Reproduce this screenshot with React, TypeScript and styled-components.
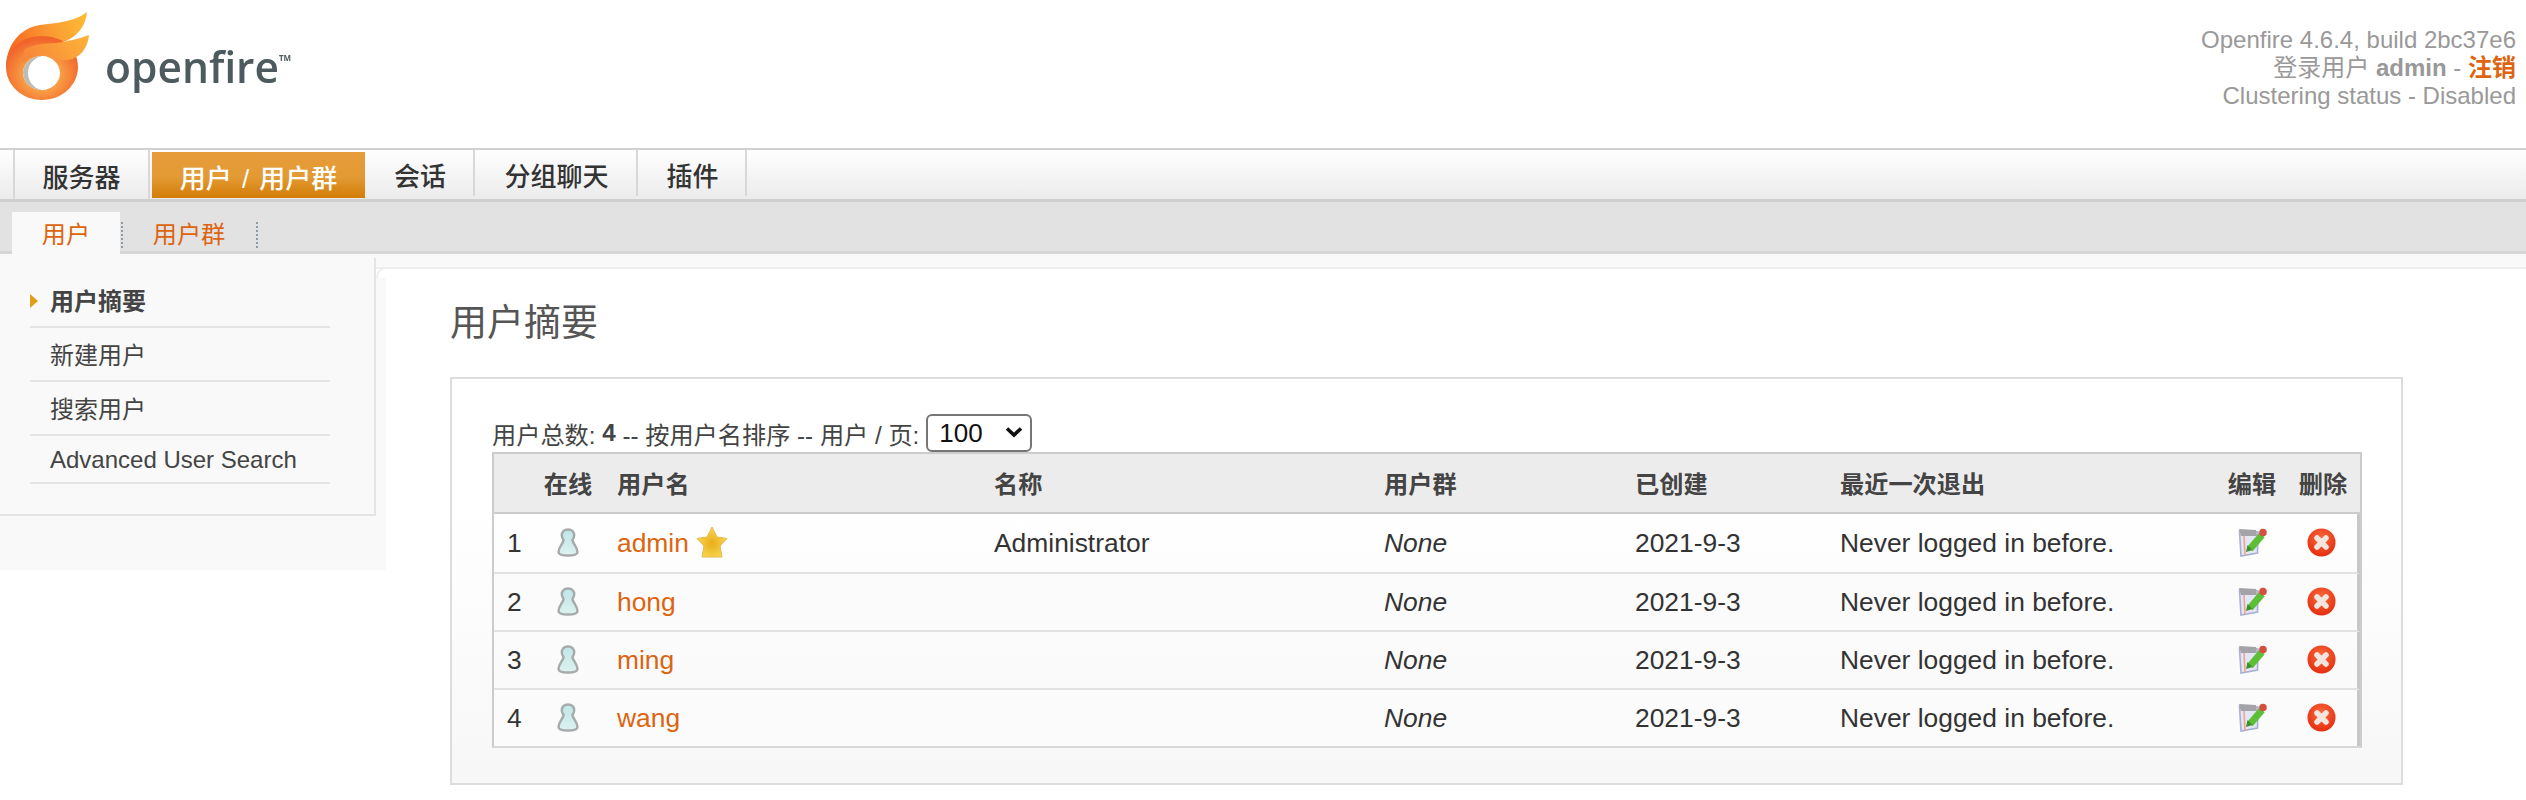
import styled, { createGlobalStyle } from "styled-components";

const GlobalStyle = createGlobalStyle`
  html, body {
    margin: 0;
    padding: 0;
    background: #fff;
    font-family: "Liberation Sans", "Noto Sans CJK SC", sans-serif;
    color: #333;
  }
`;

const Page = styled.div`
  width: 2526px;
  height: 800px;
  overflow: hidden;
`;

const Header = styled.header`
  height: 148px;
  display: flex;
  justify-content: space-between;
`;

const Brand = styled.div`
  display: flex;
  align-items: flex-start;
`;

const Wordmark = styled.span`
  font-family: "Open Sans", sans-serif;
  font-weight: 600;
  font-size: 42.5px;
  line-height: 50px;
  color: #4d5a5e;
  margin: 42px 0 0 10px;
  filter: blur(0.5px);
`;

const Trademark = styled.sup`
  font-size: 8px;
  line-height: 8px;
  font-weight: 700;
  vertical-align: 22px;
`;

const Info = styled.div`
  padding: 26px 10px 0 0;
  text-align: right;
  font-size: 24px;
  line-height: 28px;
  color: #999;
`;

const Logout = styled.a`
  color: #dd6410;
  font-weight: 700;
`;

const MainNav = styled.nav`
  height: 54px;
  box-sizing: border-box;
  display: flex;
  gap: 2px;
  padding-left: 13px;
  border-top: 2px solid #d0d0d0;
  border-bottom: 3px solid #cfcfcf;
  background: linear-gradient(#fff, #ebebeb);
`;

const MainTab = styled.a<{ $active?: boolean; $width: number }>`
  width: ${(p) => p.$width}px;
  box-sizing: border-box;
  display: flex;
  align-items: center;
  justify-content: center;
  padding-top: 2px;
  font-size: 26px;
  font-weight: 500;
  word-spacing: 3px;
  color: ${(p) => (p.$active ? "#fff" : "#333")};
  background: ${(p) =>
    p.$active
      ? "linear-gradient(#e69c3a 0%, #e39a33 55%, #d27c06 100%)"
      : "transparent"};
  margin: ${(p) => (p.$active ? "2px 0 1px" : "0 0 3px")};
  border-right: ${(p) => (p.$active ? "none" : "2px solid #d8d8d8")};

  &:first-child {
    border-left: 2px solid #d8d8d8;
    margin-bottom: 0;
  }
`;

const SubNav = styled.nav`
  height: 52px;
  box-sizing: border-box;
  display: flex;
  align-items: flex-end;
  padding-left: 12px;
  background: #e2e2e2;
  border-bottom: 3px solid #d6d6d6;
`;

const SubTab = styled.a<{ $active?: boolean; $width: number }>`
  width: ${(p) => p.$width}px;
  height: 45px;
  margin-bottom: -6px;
  padding-bottom: 5px;
  box-sizing: border-box;
  display: flex;
  align-items: center;
  justify-content: center;
  font-size: 24.2px;
  color: #dd6410;
  background: ${(p) => (p.$active ? "#f9f9f9" : "transparent")};
  position: relative;
  z-index: 1;
`;

const SubDivider = styled.span`
  width: 0;
  height: 26px;
  margin: 0 0 3px 1px;
  border-left: 2px dotted #8b9ca6;
`;

const Body = styled.div`
  display: flex;
  align-items: flex-start;
  background: linear-gradient(#f9f9f9 13px, #fff 13px);
`;

const SideColumn = styled.aside`
  width: 376px;
  height: 316px;
  padding-top: 4px;
  box-sizing: border-box;
  background: #f9f9f9;
  flex-shrink: 0;
  position: relative;

  &::after {
    content: "";
    position: absolute;
    left: 376px;
    top: 24px;
    width: 10px;
    bottom: 0;
    background: #f9f9f9;
    z-index: 1;
  }
`;

const SidePanel = styled.div`
  height: 258px;
  box-sizing: border-box;
  padding: 17px 0 0 30px;
  border-right: 2px solid #e4e4e4;
  border-bottom: 2px solid #e4e4e4;
`;

const SideItem = styled.a<{ $active?: boolean; $height: number; $lineHeight: number }>`
  display: block;
  width: 300px;
  height: ${(p) => p.$height}px;
  box-sizing: border-box;
  padding-left: 20px;
  font-size: 24px;
  line-height: ${(p) => p.$lineHeight}px;
  font-weight: ${(p) => (p.$active ? 700 : 400)};
  color: #444;
  border-bottom: 2px solid #e4e4e4;
  position: relative;
`;

const Caret = styled.span`
  position: absolute;
  left: 0;
  top: 19px;
  width: 0;
  height: 0;
  border-top: 7.5px solid transparent;
  border-bottom: 7.5px solid transparent;
  border-left: 8px solid #e0a015;
`;

const Content = styled.main`
  flex: 1;
  margin-top: 13px;
  background: #fff;
  border-top: 2px solid #eee;
  padding-left: 74px;
  position: relative;

  &::before {
    content: "";
    position: absolute;
    left: 0;
    top: -2px;
    width: 12px;
    height: 12px;
    box-sizing: border-box;
    border-top: 2px solid #eee;
    border-left: 2px solid #eee;
    border-top-left-radius: 10px;
  }
`;

const Title = styled.h1`
  margin: 0;
  height: 108px;
  font-size: 37px;
  line-height: 110px;
  font-weight: 400;
  color: #555;
`;

const Box = styled.section`
  width: 1953px;
  height: 408px;
  box-sizing: border-box;
  border: 2px solid #ddd;
  background: linear-gradient(#fff 30%, #f7f7f7);
  padding: 35px 40px 0;
`;

const Summary = styled.div`
  display: flex;
  align-items: center;
  height: 38px;
  font-size: 24.2px;
  color: #444;
  white-space: pre;
`;

const SelectWrap = styled.span`
  position: relative;
  display: inline-flex;
  margin-left: 7px;
`;

const PerPage = styled.select`
  appearance: none;
  width: 106px;
  height: 38px;
  box-sizing: border-box;
  padding-left: 11px;
  font-family: "Liberation Sans", sans-serif;
  font-size: 26px;
  color: #111;
  background: #fff;
  border: 2px solid #767676;
  border-radius: 6px;
`;

const Chevron = styled.svg`
  position: absolute;
  right: 9px;
  top: 12px;
  pointer-events: none;
`;

const Table = styled.table`
  width: 1870px;
  table-layout: fixed;
  border-collapse: separate;
  border-spacing: 0;
  box-sizing: border-box;
  border-top: 2px solid #ccc;
  border-left: 2px solid #ccc;
  border-right: 2px solid #ccc;
  border-bottom: 2px solid #d8d8d8;
  font-size: 26.4px;
  color: #333;
`;

const HeadCell = styled.th<{ $center?: boolean }>`
  height: 60px;
  box-sizing: border-box;
  padding: 0 0 2px ${(p) => (p.$center ? 0 : 16)}px;
  background: #ececec;
  border-bottom: 2px solid #ccc;
  font-size: 24.2px;
  font-weight: 700;
  color: #444;
  text-align: ${(p) => (p.$center ? "center" : "left")};
`;

const Row = styled.tr`
  &:nth-child(even) {
    background: #fbfbfb;
  }
`;

const Cell = styled.td<{ $center?: boolean; $italic?: boolean }>`
  height: 58px;
  box-sizing: border-box;
  padding: 0 0 0 ${(p) => (p.$center ? 0 : 16)}px;
  border-bottom: 2px solid #e2e2e2;
  text-align: ${(p) => (p.$center ? "center" : "left")};
  font-style: ${(p) => (p.$italic ? "italic" : "normal")};

  tr:first-child > & {
    height: 60px;
  }
  tr:last-child > & {
    height: 56px;
    border-bottom: none;
  }
  &:last-child {
    border-right: 3px solid #c8c8c8;
  }
`;

const IndexCell = styled(Cell)`
  padding-left: 13px;
`;

const UserLink = styled.a`
  color: #dd6410;
`;

const UserCell = styled.div`
  display: flex;
  align-items: center;
  gap: 7px;
`;

const IconWrap = styled.span`
  display: inline-flex;
  vertical-align: middle;
  margin-bottom: 3px;
  filter: blur(0.5px);
`;

function Flame() {
  return (
    <svg width="95" height="105" viewBox="0 0 95 105">
      <defs>
        <linearGradient id="upper" x1="0" y1="0.5" x2="1" y2="0.3">
          <stop offset="0" stopColor="#f6661f" />
          <stop offset="0.55" stopColor="#fa9a33" />
          <stop offset="1" stopColor="#fdb934" />
        </linearGradient>
        <radialGradient id="ring" cx="0.5" cy="0.6" r="0.55">
          <stop offset="0.4" stopColor="#f9a548" />
          <stop offset="1" stopColor="#f1652c" />
        </radialGradient>
        <linearGradient id="wing" x1="0" y1="0.6" x2="1" y2="0.3">
          <stop offset="0" stopColor="#f7873a" />
          <stop offset="1" stopColor="#fdb037" />
        </linearGradient>
      </defs>
      <path
        d="M6 68C6 45 20 28 40 25C55 23 75 22 87 12C86 25 78 36 66 41C55 44 38 42 26 48C15 53 8 60 6 68Z"
        fill="url(#upper)"
      />
      <path
        fillRule="evenodd"
        d="M42 36C62 36 78 48 78 67C78 85 62 100 42 100C22 100 6 85 6 67C6 48 22 36 42 36ZM42 56C31 56 23 64 23 73C23 82 31 90 42 90C52 90 60 82 60 73C60 64 52 56 42 56Z"
        fill="url(#ring)"
      />
      <path
        d="M24 50C35 42 55 44 63 42C72 40 82 38 89 35C88 48 80 58 68 60C58 61 50 54 40 55C32 56 26 60 22 63Z"
        fill="url(#wing)"
      />
      <path
        d="M42 56C31 56 23 64 23 73C23 82 31 90 42 90C33 88 28 81 28 73C28 65 33 58 42 56Z"
        fill="#bdbdb5"
      />
    </svg>
  );
}

function Person() {
  return (
    <svg width="22" height="29" viewBox="0 0 22 29">
      <defs>
        <linearGradient id="pawn" x1="0" y1="0" x2="0" y2="1">
          <stop offset="0" stopColor="#bfe6e6" />
          <stop offset="1" stopColor="#dcf2f0" />
        </linearGradient>
      </defs>
      <path
        d="M11 1.5C7 1.5 4.8 4 4.8 7.5C4.8 9.5 5.8 11 6.6 12C6 16 1.5 19 1.5 24C1.5 27 6 27.5 11 27.5C16 27.5 20.5 27 20.5 24C20.5 19 16 16 15.4 12C16.2 11 17.2 9.5 17.2 7.5C17.2 4 15 1.5 11 1.5Z"
        fill="url(#pawn)"
        stroke="#a6aaaa"
        strokeWidth="2.4"
      />
    </svg>
  );
}

function Star() {
  return (
    <svg width="32" height="32" viewBox="0 0 32 32">
      <defs>
        <radialGradient id="gold" cx="0.5" cy="0.55" r="0.6">
          <stop offset="0" stopColor="#e8ac18" />
          <stop offset="1" stopColor="#fbdc58" />
        </radialGradient>
      </defs>
      <path
        d="M16 1L21 11L31 12.5L24 20L26 31H6L8 20L1 12.5L11 11Z"
        fill="url(#gold)"
        stroke="#e6b84a"
        strokeWidth="1"
        strokeLinejoin="round"
      />
    </svg>
  );
}

function EditIcon() {
  return (
    <svg width="29" height="29" viewBox="0 0 29 29">
      <path d="M1.5 3L20 4L19.5 25L3 28Z" fill="#e2e6f7" stroke="#a9afd0" strokeWidth="1.6" />
      <path d="M1 1L18 2L19 8L3 8Z" fill="#a3a3a8" />
      <path d="M6 8L7 27" stroke="#f0a48c" strokeWidth="1.6" />
      <path d="M12 21L24 7" stroke="#5cbf36" strokeWidth="7" />
      <path d="M8 24L9.5 17L14.5 22Z" fill="#3f8f2a" />
      <circle cx="25" cy="4.5" r="3.8" fill="#d3503e" />
    </svg>
  );
}

function DeleteIcon() {
  return (
    <svg width="29" height="29" viewBox="0 0 29 29">
      <defs>
        <radialGradient id="red" cx="0.5" cy="0.35" r="0.7">
          <stop offset="0" stopColor="#fb6a3d" />
          <stop offset="1" stopColor="#e3290b" />
        </radialGradient>
      </defs>
      <circle cx="14.5" cy="14.5" r="14" fill="url(#red)" />
      <path d="M10 10L19 19M19 10L10 19" stroke="#f4e6df" strokeWidth="5.5" strokeLinecap="round" />
    </svg>
  );
}

const users = [
  { name: "admin", full: "Administrator", isAdmin: true },
  { name: "hong", full: "" },
  { name: "ming", full: "" },
  { name: "wang", full: "" },
];

function App() {
  return (
    <Page>
      <GlobalStyle />
      <Header>
        <Brand>
          <Flame />
          <Wordmark>
            openfire<Trademark>TM</Trademark>
          </Wordmark>
        </Brand>
        <Info>
          <div>Openfire 4.6.4, build 2bc37e6</div>
          <div>
            登录用户 <b>admin</b> - <Logout>注销</Logout>
          </div>
          <div>Clustering status - Disabled</div>
        </Info>
      </Header>
      <MainNav>
        <MainTab $width={137}>服务器</MainTab>
        <MainTab $active $width={213}>用户 / 用户群</MainTab>
        <MainTab $width={108}>会话</MainTab>
        <MainTab $width={161}>分组聊天</MainTab>
        <MainTab $width={107}>插件</MainTab>
      </MainNav>
      <SubNav>
        <SubTab $active $width={108}>用户</SubTab>
        <SubDivider />
        <SubTab $width={132}>用户群</SubTab>
        <SubDivider />
      </SubNav>
      <Body>
        <SideColumn>
          <SidePanel>
            <SideItem $active $height={53} $lineHeight={54}>
              <Caret />
              用户摘要
            </SideItem>
            <SideItem $height={54} $lineHeight={55}>新建用户</SideItem>
            <SideItem $height={54} $lineHeight={55}>搜索用户</SideItem>
            <SideItem $height={48} $lineHeight={47}>Advanced User Search</SideItem>
          </SidePanel>
        </SideColumn>
        <Content>
          <Title>用户摘要</Title>
          <Box>
            <Summary>
              用户总数: <b>4</b> -- 按用户名排序 -- 用户 / 页:
              <SelectWrap>
                <PerPage defaultValue="100">
                  <option value="100">100</option>
                </PerPage>
                <Chevron width="18" height="12" viewBox="0 0 18 12">
                  <path d="M2 2.5L9 9L16 2.5" fill="none" stroke="#111" strokeWidth="3.6" />
                </Chevron>
              </SelectWrap>
            </Summary>
            <Table>
              <colgroup>
                <col width="41" />
                <col width="66" />
                <col width="377" />
                <col width="390" />
                <col width="251" />
                <col width="205" />
                <col width="394" />
                <col width="68" />
                <col width="74" />
              </colgroup>
              <thead>
                <tr>
                  <HeadCell />
                  <HeadCell $center>在线</HeadCell>
                  <HeadCell>用户名</HeadCell>
                  <HeadCell>名称</HeadCell>
                  <HeadCell>用户群</HeadCell>
                  <HeadCell>已创建</HeadCell>
                  <HeadCell>最近一次退出</HeadCell>
                  <HeadCell $center>编辑</HeadCell>
                  <HeadCell $center>删除</HeadCell>
                </tr>
              </thead>
              <tbody>
                {users.map((user, i) => (
                  <Row key={user.name}>
                    <IndexCell>{i + 1}</IndexCell>
                    <Cell $center>
                      <IconWrap>
                        <Person />
                      </IconWrap>
                    </Cell>
                    <Cell>
                      <UserCell>
                        <UserLink>{user.name}</UserLink>
                        {user.isAdmin && (
                          <IconWrap>
                            <Star />
                          </IconWrap>
                        )}
                      </UserCell>
                    </Cell>
                    <Cell>{user.full}</Cell>
                    <Cell $italic>None</Cell>
                    <Cell>2021-9-3</Cell>
                    <Cell>Never logged in before.</Cell>
                    <Cell $center>
                      <IconWrap>
                        <EditIcon />
                      </IconWrap>
                    </Cell>
                    <Cell $center>
                      <IconWrap>
                        <DeleteIcon />
                      </IconWrap>
                    </Cell>
                  </Row>
                ))}
              </tbody>
            </Table>
          </Box>
        </Content>
      </Body>
    </Page>
  );
}

export default App;
